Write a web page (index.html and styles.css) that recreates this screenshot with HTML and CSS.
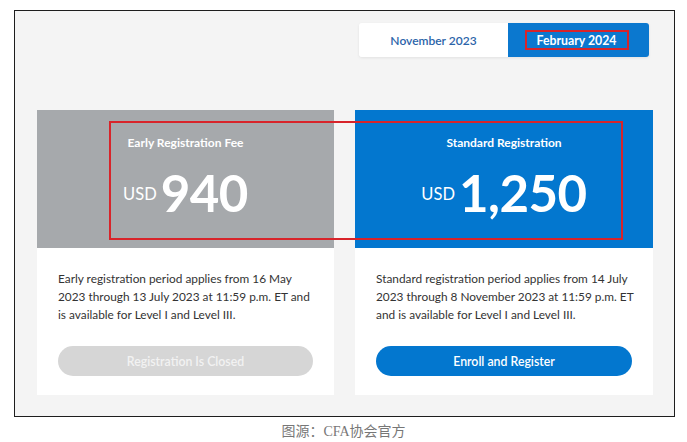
FILE: index.html
```html
<!DOCTYPE html>
<html lang="en">
<head>
<meta charset="utf-8">
<link rel="stylesheet" href="styles.css">
</head>
<body>
<div class="frame">
  <div class="tabs-row">
    <div class="tabs">
      <div class="tab">November 2023</div>
      <div class="tab active"><span class="mark-small">February 2024</span></div>
    </div>
  </div>
  <div class="cards">
    <div class="card">
      <div class="card-head grey">
        <div class="title">Early Registration Fee</div>
        <div class="price"><span class="cur">USD</span><span class="amt">940</span></div>
      </div>
      <div class="card-body">
        <p>Early registration period applies from 16 May 2023 through 13 July 2023 at 11:59 p.m. ET and is available for Level I and Level III.</p>
        <div class="btn closed">Registration Is Closed</div>
      </div>
    </div>
    <div class="card">
      <div class="card-head blue">
        <div class="title">Standard Registration</div>
        <div class="price"><span class="cur">USD</span><span class="amt">1,250</span></div>
      </div>
      <div class="card-body">
        <p>Standard registration period applies from 14 July 2023 through 8 November 2023 at 11:59 p.m. ET and is available for Level I and Level III.</p>
        <div class="btn primary">Enroll and Register</div>
      </div>
    </div>
    <div class="mark-big"></div>
  </div>
</div>
<div class="caption">图源：CFA协会官方</div>
</body>
</html>
```

FILE: styles.css
```css
* { box-sizing: border-box; }
html, body { margin: 0; padding: 0; background: #fff; }
body { font-family: Lato, "Noto Sans", sans-serif; width: 687px; height: 442px; overflow: hidden; }

.frame {
  margin: 10px 0 0 14px;
  width: 661px;
  height: 407px;
  border: 1px solid #1e1e1e;
  background: #f4f4f4;
  padding: 12px 25px 0 22px;
}

.tabs-row { display: flex; justify-content: flex-end; }
.tabs {
  display: flex;
  height: 34px;
  border-radius: 3px;
  box-shadow: 0 1px 3px rgba(0,0,0,0.08);
  overflow: hidden;
}
.tab {
  display: flex; align-items: center; justify-content: center;
  width: 149px;
  background: #fff;
  color: #2b64a9;
  font-size: 12px;
  font-weight: 600;
}
.tab.active {
  width: 141px;
  background: #0b78cf;
  color: #fff;
  font-weight: 700;
}
.mark-small {
  display: flex; align-items: center; justify-content: center;
  width: 104px; height: 20px;
  margin-left: -4px;
  border: 2px solid #d8242a;
  font-size: 12.3px;
}

.cards {
  position: relative;
  display: flex;
  gap: 21px;
  margin-top: 53px;
  margin-right: -4px;
}
.card { width: 297px; }
.card + .card { width: 298px; }
.card-head {
  height: 138px;
  display: flex; flex-direction: column; align-items: center;
  color: #fff;
  padding-top: 27px;
}
.card-head.grey { background: #a6a9ac; }
.card-head.blue { background: #0377cf; }
.title { font-size: 12px; font-weight: 700; line-height: 12px; }
.price { display: flex; align-items: center; margin-top: 19px; }
.cur { font-size: 16.5px; font-weight: 400; margin-right: 4px; margin-top: 2px; }
.amt { font-size: 51px; font-weight: 700; line-height: 50px; letter-spacing: -0.5px; }

.card-body {
  background: #fff;
  height: 147px;
  padding: 22px 16px 0 21px;
}
.card-body p {
  margin: 0;
  font-size: 11.85px;
  line-height: 18px;
  color: #333;
}
.btn {
  margin-top: 22px;
  height: 30px;
  border-radius: 15px;
  display: flex; align-items: center; justify-content: center;
  font-size: 12.3px;
  font-weight: 600;
}
.btn.closed { background: #d6d6d6; color: #f2f2f2; width: 255px; }
.btn.primary { background: #0377cf; color: #fff; width: 256px; }

.mark-big {
  position: absolute;
  left: 72px; top: 11px;
  width: 514px; height: 119px;
  border: 2px solid #d8242a;
}

.caption {
  text-align: center;
  margin-top: 7px;
  font-family: "Liberation Serif", "Noto Sans CJK SC", serif;
  font-size: 14px;
  color: #777;
  line-height: 16px;
}
```
